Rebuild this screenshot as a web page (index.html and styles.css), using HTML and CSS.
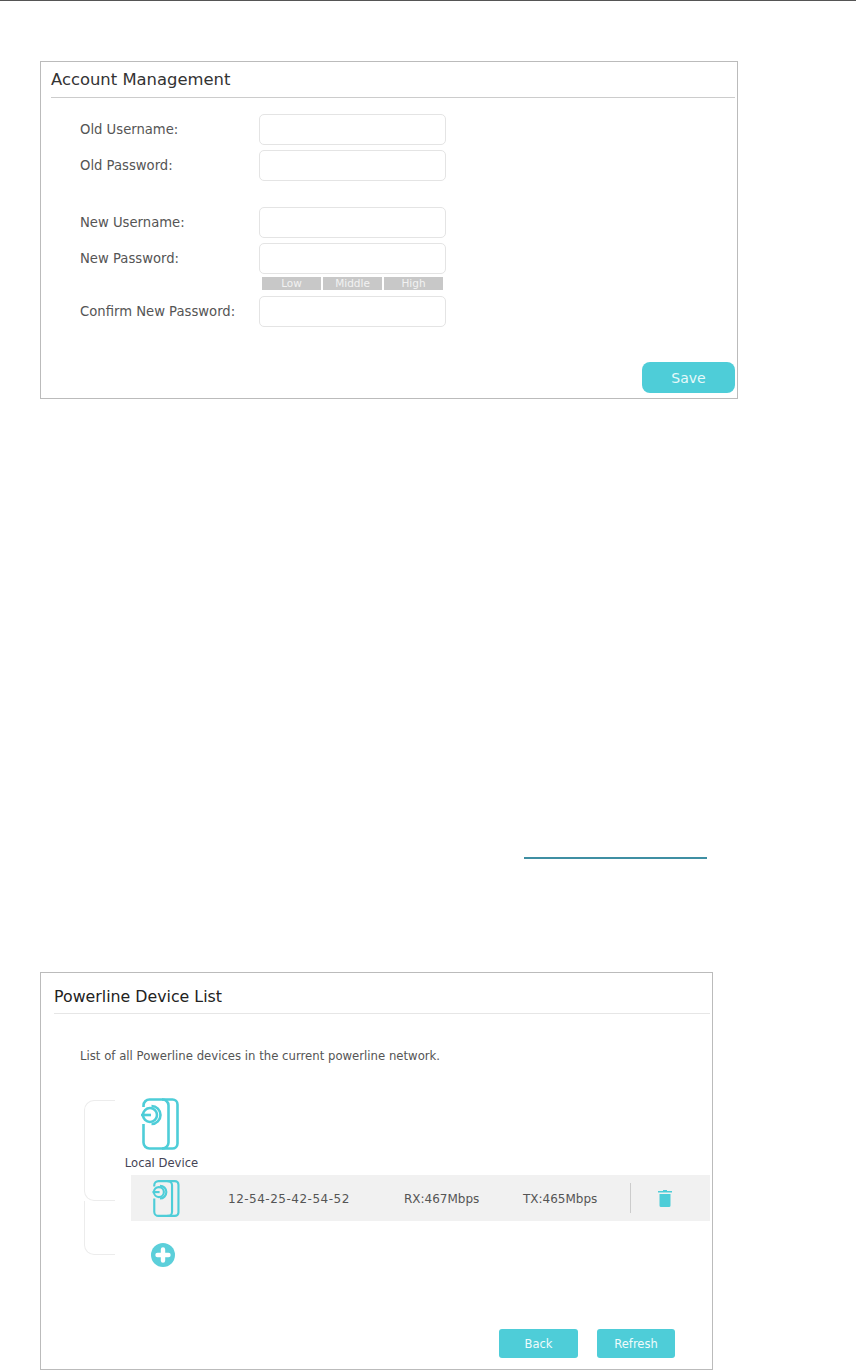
FILE: index.html
```html
<!DOCTYPE html>
<html lang="en">

<head>
  <meta charset="UTF-8">
  <meta name="viewport" content="width=device-width, initial-scale=1.0">
  <title>Account Management</title>
  <link rel="stylesheet" href="styles.css">
</head>

<body>
  <div class="top-rule"></div>

  <section class="panel account-panel">
    <h2 class="panel-title">Account Management</h2>
    <form class="account-form">
      <div class="form-row">
        <label for="oldUser">Old Username:</label>
        <input type="text" id="oldUser">
      </div>
      <div class="form-row">
        <label for="oldPass">Old Password:</label>
        <input type="password" id="oldPass">
      </div>
      <div class="form-row group-start">
        <label for="newUser">New Username:</label>
        <input type="text" id="newUser">
      </div>
      <div class="form-row">
        <label for="newPass">New Password:</label>
        <input type="password" id="newPass">
      </div>
      <div class="strength">
        <span>Low</span>
        <span>Middle</span>
        <span>High</span>
      </div>
      <div class="form-row">
        <label for="confirmPass">Confirm New Password:</label>
        <input type="password" id="confirmPass">
      </div>
      <div class="save-row">
        <button type="button" class="btn-save">Save</button>
      </div>
    </form>
  </section>

  <div class="link-rule"></div>

  <section class="panel device-panel">
    <h2 class="panel-title">Powerline Device List</h2>
    <p class="desc">List of all Powerline devices in the current powerline network.</p>

    <div class="tree">
      <div class="tree-lines">
        <div class="bracket-top"></div>
        <div class="bracket-bottom"></div>
      </div>
      <div class="tree-items">
        <div class="local-device">
          <svg class="icon-device" viewBox="0 0 38 52" fill="none" stroke="#4ecdd8" stroke-width="2.6">
            <path d="M2.5 26v18.5a6 6 0 0 0 6 6h13a6 6 0 0 0 6-6v-37a6 6 0 0 0-6-6h-13a6 6 0 0 0-6 6V9" />
            <path d="M21 1.500h10.500a5 5 0 0 1 5 5v39a5 5 0 0 1-5 5H21" />
            <path d="M10.500 8a9 9 0 0 1 0 18" />
            <circle cx="9" cy="17" r="7" />
            <path d="M0 17h10" />
          </svg>
          <span>Local Device</span>
        </div>
        <div class="device-row">
          <svg class="icon-device small" viewBox="0 0 38 52" fill="none" stroke="#4ecdd8" stroke-width="3">
            <path d="M2.5 26v18.5a6 6 0 0 0 6 6h13a6 6 0 0 0 6-6v-37a6 6 0 0 0-6-6h-13a6 6 0 0 0-6 6V9" />
            <path d="M21 1.500h10.500a5 5 0 0 1 5 5v39a5 5 0 0 1-5 5H21" />
            <path d="M10.500 8a9 9 0 0 1 0 18" />
            <circle cx="9" cy="17" r="7" />
            <path d="M0 17h10" />
          </svg>
          <span class="mac">12-54-25-42-54-52</span>
          <span class="rx">RX:467Mbps</span>
          <span class="tx">TX:465Mbps</span>
          <span class="divider"></span>
          <svg class="icon-trash" viewBox="0 0 14 17" fill="#4ecdd8">
            <path d="M5 0h4v1h5v1.500H0V1h5z" />
            <path d="M1.500 4h11v11.500a1.500 1.500 0 0 1-1.500 1.500H3a1.500 1.500 0 0 1-1.500-1.500z" />
          </svg>
        </div>
        <svg class="icon-add" viewBox="0 0 24 24">
          <circle cx="12" cy="12" r="12" fill="#5ccfda" />
          <path d="M12 6.500v11M6.500 12h11" stroke="#fff" stroke-width="4.400" stroke-linecap="round" />
        </svg>
      </div>
    </div>

    <div class="device-actions">
      <button type="button" class="btn-action">Back</button>
      <button type="button" class="btn-action refresh">Refresh</button>
    </div>
  </section>
</body>

</html>
```

FILE: styles.css
```css
* {
  box-sizing: border-box;
}

body {
  margin: 0;
  padding: 0;
  background-color: #fff;
  font-family: "DejaVu Sans", Verdana, sans-serif;
  color: #555;
}

.top-rule {
  height: 1px;
  background-color: #555;
}

.panel {
  margin-left: 40px;
  border: 1px solid #bbb;
}

.account-panel {
  width: 698px;
  height: 338px;
  margin-top: 60px;
}

.device-panel {
  width: 673px;
  height: 398px;
  margin-top: 113px;
}

.panel-title {
  margin: 0 2px 0 10px;
  height: 36px;
  padding-top: 1px;
  border-bottom: 1px solid #ccc;
  font-size: 16.400px;
  font-weight: 400;
  line-height: 34px;
  color: #333;
}

.device-panel .panel-title {
  margin-left: 13px;
  height: 41px;
  padding-top: 4px;
  border-bottom-color: #e6e6e6;
  font-size: 15.800px;
  line-height: 39px;
  color: #222;
}

/* account form */
.account-form {
  padding: 16px 2px 0 39px;
}

.form-row {
  display: flex;
  align-items: center;
  margin-bottom: 5px;
}

.form-row label {
  width: 179px;
  padding-bottom: 1px;
  font-size: 13.200px;
}

.form-row input {
  width: 187px;
  height: 31px;
  border: 1px solid #e4e4e4;
  border-radius: 5px;
  background-color: #fff;
}

.group-start {
  margin-top: 26px;
}

.strength {
  display: flex;
  gap: 2px;
  width: 181px;
  height: 13px;
  margin: -2px 0 6px 182px;
}

.strength span {
  flex: 1;
  background-color: #c8c8c8;
  color: #f2f2f2;
  font-size: 10.500px;
  line-height: 13px;
  text-align: center;
}

.save-row {
  display: flex;
  justify-content: flex-end;
  margin-top: 35px;
}

.btn-save {
  width: 93px;
  height: 31px;
  border: none;
  border-radius: 8px;
  background-color: #4ecdd8;
  color: #e6f9fa;
  font-family: inherit;
  font-size: 14px;
}

.link-rule {
  width: 183px;
  height: 2px;
  margin: 458px 0 0 524px;
  background-color: #3f8fa3;
}

/* device list */
.desc {
  margin: 0;
  padding: 33px 0 0 39px;
  font-size: 11.700px;
  line-height: 18px;
  color: #555;
}

.tree {
  display: flex;
  margin: 33px 0 0 43px;
}

.tree-lines {
  width: 31px;
  padding-top: 2px;
}

.bracket-top {
  height: 101px;
  border: 1px solid #ececec;
  border-right: none;
  border-radius: 10px 0 0 10px;
}

.bracket-bottom {
  height: 54px;
  border-left: 1px solid #ececec;
  border-bottom: 1px solid #ececec;
  border-radius: 0 0 0 10px;
}

.tree-items {
  flex: 1;
  margin-left: 16px;
  margin-right: 2px;
}

.local-device {
  display: flex;
  flex-direction: column;
  align-items: center;
  width: 75px;
  margin-left: -7px;
  font-size: 11.600px;
  color: #445;
}

.icon-device {
  display: block;
  width: 38px;
  height: 52px;
  overflow: visible;
}

.local-device .icon-device {
  margin-right: 3px;
}

.local-device span {
  margin-top: 5px;
  line-height: 16px;
}

.device-row {
  display: flex;
  align-items: center;
  height: 46px;
  margin-top: 4px;
  padding-left: 21px;
  background-color: #f1f1f1;
  font-size: 12px;
  color: #555;
}

.icon-device.small {
  width: 28px;
  height: 37px;
}

.mac {
  width: 176px;
  margin-left: 48px;
  padding-top: 1px;
  letter-spacing: 0.500px;
}

.rx {
  width: 119px;
  padding-top: 1px;
}

.tx {
  width: 107px;
  padding-top: 1px;
}

.divider {
  width: 1px;
  height: 30px;
  background-color: #ccc;
}

.icon-trash {
  width: 14px;
  height: 17px;
  margin-left: 27px;
}

.icon-add {
  display: block;
  width: 24px;
  height: 24px;
  margin: 22px 0 0 20px;
}

.device-actions {
  display: flex;
  justify-content: flex-end;
  gap: 19px;
  margin: 62px 37px 0 0;
}

.btn-action {
  width: 79px;
  height: 29px;
  border: none;
  border-radius: 3px;
  background-color: #4ecdd8;
  color: #f0fbfc;
  font-family: inherit;
  font-size: 11.500px;
}

.btn-action.refresh {
  width: 78px;
}
```
